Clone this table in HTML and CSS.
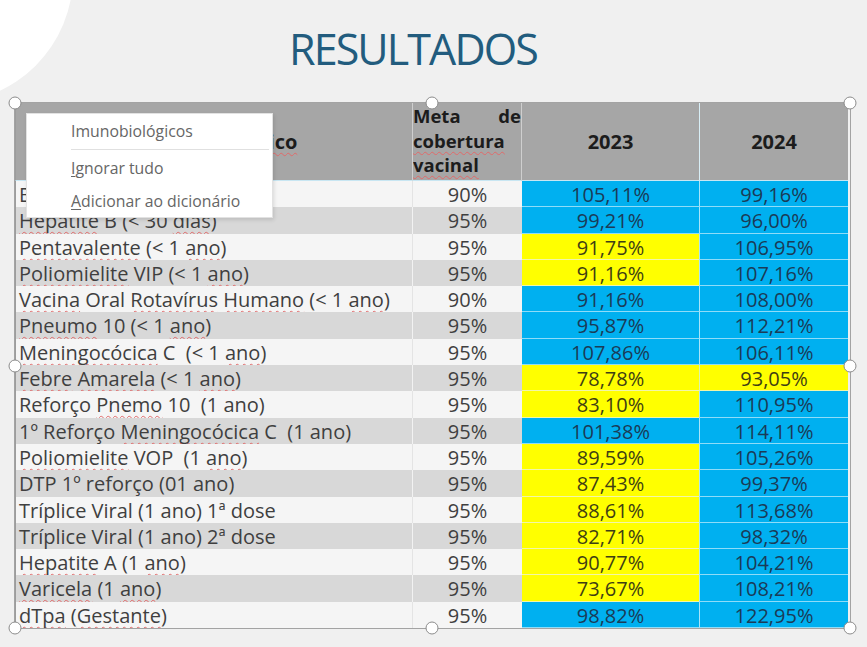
FILE: index.html
```html
<!DOCTYPE html>
<html lang="pt">
<head>
<meta charset="utf-8">
<title>Resultados</title>
<link rel="stylesheet" href="styles.css">
</head>
<body>
<div class="blob"></div>
<h1 class="title">RESULTADOS</h1>
<div class="frame">
  <div class="table">
    <div class="row head">
      <div class="cell c1 hd"><span class="sp">Imunobiológico</span></div>
      <div class="cell c2 hd meta">Meta de <span class="sp">cobertura</span> <span class="sp">vacinal</span></div>
      <div class="cell c3 hd">2023</div>
      <div class="cell c4 hd">2024</div>
    </div>
    <div class="row"><div class="cell c1">BCG (&lt; 1 ano)</div><div class="cell c2">90%</div><div class="cell c3 b">105,11%</div><div class="cell c4 b">99,16%</div></div>
    <div class="row"><div class="cell c1"><span class="sp">Hepatite</span> B (&lt; 30 <span class="sp">dias</span>)</div><div class="cell c2">95%</div><div class="cell c3 b">99,21%</div><div class="cell c4 b">96,00%</div></div>
    <div class="row"><div class="cell c1"><span class="sp">Pentavalente</span> (&lt; 1 <span class="sp">ano</span>)</div><div class="cell c2">95%</div><div class="cell c3 y">91,75%</div><div class="cell c4 b">106,95%</div></div>
    <div class="row"><div class="cell c1"><span class="sp">Poliomielite</span> VIP (&lt; 1 <span class="sp">ano</span>)</div><div class="cell c2">95%</div><div class="cell c3 y">91,16%</div><div class="cell c4 b">107,16%</div></div>
    <div class="row"><div class="cell c1"><span class="sp">Vacina</span> Oral <span class="sp">Rotavírus</span> <span class="sp">Humano</span> (&lt; 1 <span class="sp">ano</span>)</div><div class="cell c2">90%</div><div class="cell c3 b">91,16%</div><div class="cell c4 b">108,00%</div></div>
    <div class="row"><div class="cell c1"><span class="sp">Pneumo</span> 10 (&lt; 1 <span class="sp">ano</span>)</div><div class="cell c2">95%</div><div class="cell c3 b">95,87%</div><div class="cell c4 b">112,21%</div></div>
    <div class="row"><div class="cell c1"><span class="sp">Meningocócica</span> C&nbsp; (&lt; 1 <span class="sp">ano</span>)</div><div class="cell c2">95%</div><div class="cell c3 b">107,86%</div><div class="cell c4 b">106,11%</div></div>
    <div class="row"><div class="cell c1"><span class="sp">Febre</span> <span class="sp">Amarela</span> (&lt; 1 <span class="sp">ano</span>)</div><div class="cell c2">95%</div><div class="cell c3 y">78,78%</div><div class="cell c4 y">93,05%</div></div>
    <div class="row"><div class="cell c1">Reforço <span class="sp">Pnemo</span> 10&nbsp; (1 ano)</div><div class="cell c2">95%</div><div class="cell c3 y">83,10%</div><div class="cell c4 b">110,95%</div></div>
    <div class="row"><div class="cell c1">1º Reforço <span class="sp">Meningocócica</span> C&nbsp; (1 ano)</div><div class="cell c2">95%</div><div class="cell c3 b">101,38%</div><div class="cell c4 b">114,11%</div></div>
    <div class="row"><div class="cell c1"><span class="sp">Poliomielite</span> VOP&nbsp; (1 <span class="sp">ano</span>)</div><div class="cell c2">95%</div><div class="cell c3 y">89,59%</div><div class="cell c4 b">105,26%</div></div>
    <div class="row"><div class="cell c1">DTP 1º reforço (01 ano)</div><div class="cell c2">95%</div><div class="cell c3 y">87,43%</div><div class="cell c4 b">99,37%</div></div>
    <div class="row"><div class="cell c1">Tríplice Viral (1 ano) 1ª dose</div><div class="cell c2">95%</div><div class="cell c3 y">88,61%</div><div class="cell c4 b">113,68%</div></div>
    <div class="row"><div class="cell c1">Tríplice Viral (1 ano) 2ª dose</div><div class="cell c2">95%</div><div class="cell c3 y">82,71%</div><div class="cell c4 b">98,32%</div></div>
    <div class="row"><div class="cell c1"><span class="sp">Hepatite</span> A (1 <span class="sp">ano</span>)</div><div class="cell c2">95%</div><div class="cell c3 y">90,77%</div><div class="cell c4 b">104,21%</div></div>
    <div class="row"><div class="cell c1"><span class="sp">Varicela</span> (1 <span class="sp">ano</span>)</div><div class="cell c2">95%</div><div class="cell c3 y">73,67%</div><div class="cell c4 b">108,21%</div></div>
    <div class="row"><div class="cell c1"><span class="sp">dTpa</span> (<span class="sp">Gestante</span>)</div><div class="cell c2">95%</div><div class="cell c3 b">98,82%</div><div class="cell c4 b">122,95%</div></div>
  </div>

  <span class="handle h-tl"></span>
  <span class="handle h-tc"></span>
  <span class="handle h-tr"></span>
  <span class="handle h-ml"></span>
  <span class="handle h-mr"></span>
  <span class="handle h-bl"></span>
  <span class="handle h-bc"></span>
  <span class="handle h-br"></span>

  <div class="menu">
    <div class="mi first">Imunobiológicos</div>
    <div class="sep"></div>
    <div class="mi"><u>I</u>gnorar tudo</div>
    <div class="mi"><u>A</u>dicionar ao dicionário</div>
  </div>
</div>
</body>
</html>
```

FILE: styles.css
```css
html, body {
  margin: 0;
  padding: 0;
}
body {
  background: #f0f0f0;
  font-family: "Open Sans", "Noto Sans", sans-serif;
  width: 867px;
  height: 647px;
  overflow: hidden;
  position: relative;
}
.blob {
  position: absolute;
  left: -182px;
  top: -152px;
  width: 255px;
  height: 255px;
  border-radius: 50%;
  background: #ffffff;
}
.title {
  position: relative;
  margin: 0 0 0 289px;
  padding-top: 27px;
  height: 43px;
  font-size: 43px;
  line-height: 43px;
  font-weight: 400;
  color: #225c7e;
  letter-spacing: -1.9px;
}
.frame {
  position: relative;
  margin: 33px 0 0 15px;
  width: 835px;
  height: 525px;
  box-shadow: 0 0 0 1px #a3a3a3;
}
.table {
  display: flex;
  flex-direction: column;
}
.row {
  display: grid;
  grid-template-columns: 397px 110px 177px 151px;
  height: 26.3px;
  font-size: 20px;
  line-height: 26.3px;
  font-weight: 500;
  color: #3f3f3f;
}
.row.head {
  height: 78px;
}
.cell {
  white-space: nowrap;
  overflow: hidden;
}
.c1 {
  padding-left: 3px;
  padding-top: 1px;
}
.c2, .c3, .c4 {
  text-align: center;
  padding-top: 1px;
}
.row:nth-child(even) .c1,
.row:nth-child(even) .c2 {
  background: #f5f5f5;
}
.row:nth-child(odd) .c1,
.row:nth-child(odd) .c2 {
  background: #d8d8d8;
}
.row .c2 {
  border-left: 1px solid #f2f2f2;
}
.row:nth-child(even) .c2 {
  border-left-color: #e4e4e4;
}
.c1 {
  border-left: 1px solid #9c9c9c;
}
.b {
  background: #00b0f0;
  color: #1b3b57;
  border-bottom: 1px solid #8fdcf8;
}
.y {
  background: #ffff00;
  color: #3e3e14;
  border-bottom: 1px solid #f2f6a8;
}
.c4 {
  border-left: 1px solid #a8e4fa;
  margin-right: 2px;
}
.c4.y {
  border-left-color: #d9f2b0;
}
.row.head .cell {
  background: #a6a6a6;
  color: #1c1c1c;
  font-weight: 700;
  border-bottom: 1px solid #c8e6f2;
}
.row.head .hd {
  line-height: 78px;
  padding-top: 0;
}
.row.head .c1 {
  text-align: center;
  font-size: 20px;
  padding-left: 12px;
}
.row.head .c2 {
  border-left: 1px solid #cfcfcf;
  border-right: 1px solid #cfcfcf;
}
.row.head .c4 {
  border-left: 1px solid #d8eef6;
}
.row.head .meta {
  white-space: normal;
  text-align: justify;
  line-height: 24.5px;
  padding: 1px 0 0 0;
  font-size: 18.5px;
}
.sp {
  text-decoration: underline wavy #e06a6a;
  text-decoration-thickness: 1px;
  text-underline-offset: 3px;
  text-decoration-skip-ink: none;
}
.handle {
  position: absolute;
  width: 11px;
  height: 11px;
  border-radius: 50%;
  background: #ffffff;
  border: 1.5px solid #8c8c8c;
  transform: translate(-50%, -50%);
}
.h-tl { left: 0; top: 0; }
.h-tc { left: 417px; top: 0; }
.h-tr { left: 835px; top: 0; }
.h-ml { left: 0; top: 263px; }
.h-mr { left: 835px; top: 263px; }
.h-bl { left: 0; top: 525px; }
.h-bc { left: 417px; top: 525px; }
.h-br { left: 835px; top: 525px; }
.menu {
  position: absolute;
  left: 11px;
  top: 10px;
  width: 247px;
  height: 105px;
  box-sizing: border-box;
  background: #ffffff;
  border: 1px solid #e2e2e2;
  box-shadow: 1px 2px 4px rgba(0, 0, 0, 0.12);
  padding-top: 3px;
  display: flex;
  flex-direction: column;
  font-size: 15.8px;
  color: #666666;
}
.mi {
  height: 28px;
  line-height: 28px;
  padding-left: 44px;
  white-space: nowrap;
}
.sep {
  height: 1px;
  background: #e0e0e0;
  margin: 4px 3px 4px 44px;
}
.mi + .mi {
  margin-top: 5px;
}
.mi u {
  text-underline-offset: 2px;
}
```
